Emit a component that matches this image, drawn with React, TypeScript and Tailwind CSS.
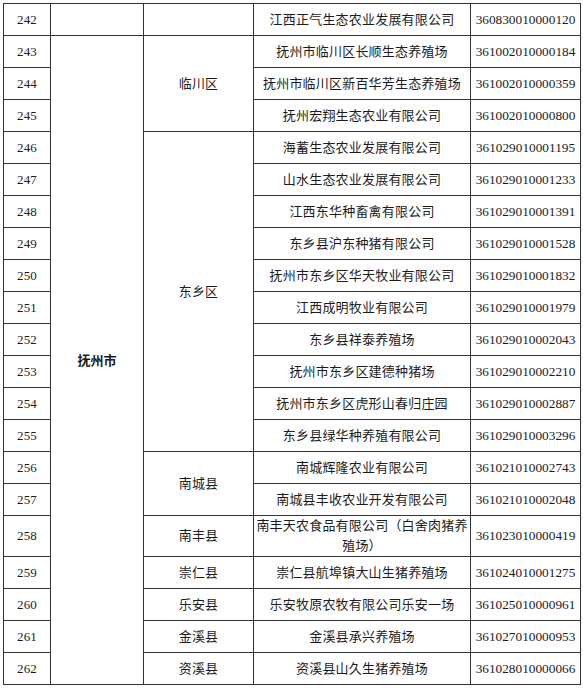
const rows: { no: number; city?: string; district?: string; span?: number; name: React.ReactNode; code: string; tall?: boolean }[] = [
  { no: 242, name: "江西正气生态农业发展有限公司", code: "360830010000120" },
  { no: 243, district: "临川区", span: 3, name: "抚州市临川区长顺生态养殖场", code: "361002010000184" },
  { no: 244, name: "抚州市临川区新百华芳生态养殖场", code: "361002010000359" },
  { no: 245, name: "抚州宏翔生态农业有限公司", code: "361002010000800" },
  { no: 246, district: "东乡区", span: 10, name: "海蓄生态农业发展有限公司", code: "361029010001195" },
  { no: 247, name: "山水生态农业发展有限公司", code: "361029010001233" },
  { no: 248, name: "江西东华种畜禽有限公司", code: "361029010001391" },
  { no: 249, name: "东乡县沪东种猪有限公司", code: "361029010001528" },
  { no: 250, name: "抚州市东乡区华天牧业有限公司", code: "361029010001832" },
  { no: 251, name: "江西成明牧业有限公司", code: "361029010001979" },
  { no: 252, name: "东乡县祥泰养殖场", code: "361029010002043" },
  { no: 253, name: "抚州市东乡区建德种猪场", code: "361029010002210" },
  { no: 254, name: "抚州市东乡区虎形山春归庄园", code: "361029010002887" },
  { no: 255, name: "东乡县绿华种养殖有限公司", code: "361029010003296" },
  { no: 256, district: "南城县", span: 2, name: "南城辉隆农业有限公司", code: "361021010002743" },
  { no: 257, name: "南城县丰收农业开发有限公司", code: "361021010002048" },
  {
    no: 258,
    district: "南丰县",
    span: 1,
    tall: true,
    name: (
      <>
        南丰天农食品有限公司（白舍肉猪养
        <br />
        殖场）
      </>
    ),
    code: "361023010000419",
  },
  { no: 259, district: "崇仁县", span: 1, name: "崇仁县航埠镇大山生猪养殖场", code: "361024010001275" },
  { no: 260, district: "乐安县", span: 1, name: "乐安牧原农牧有限公司乐安一场", code: "361025010000961" },
  { no: 261, district: "金溪县", span: 1, name: "金溪县承兴养殖场", code: "361027010000953" },
  { no: 262, district: "资溪县", span: 1, name: "资溪县山久生猪养殖场", code: "361028010000066" },
];

export default function App() {
  const cell = "border border-[#333] text-center align-middle p-0";

  return (
    <main className="min-h-screen bg-white pt-[3px] pl-[3px] text-[#1c1c1c]">
      <table
        className="border-collapse table-fixed w-[577px] text-[13px] tracking-[0.2px]"
        style={{ fontFamily: '"Liberation Serif", "Noto Sans CJK SC", serif' }}
      >
        <colgroup>
          <col className="w-[47px]" />
          <col className="w-[93px]" />
          <col className="w-[110px]" />
          <col className="w-[217px]" />
          <col className="w-[110px]" />
        </colgroup>
        <tbody>
          {rows.map((r) => (
            <tr key={r.no} className={r.tall ? "h-[38px]" : "h-[32px]"}>
              <td className={cell}>{r.no}</td>
              {r.no === 242 && <td className={cell}></td>}
              {r.no === 242 && <td className={cell}></td>}
              {r.no === 243 && (
                <td
                  rowSpan={20}
                  className={cell + " font-bold text-[13px] tracking-normal"}
                  style={{ fontFamily: '"Noto Sans CJK SC", sans-serif' }}
                >
                  抚州市
                </td>
              )}
              {r.district && (
                <td rowSpan={r.span} className={cell}>
                  {r.district}
                </td>
              )}
              <td className={cell + (r.tall ? " leading-[20px] whitespace-nowrap px-[2px]" : " whitespace-nowrap")}>{r.name}</td>
              <td className={cell + " text-[13.3px] tracking-normal"}>{r.code}</td>
            </tr>
          ))}
        </tbody>
      </table>
    </main>
  );
}
